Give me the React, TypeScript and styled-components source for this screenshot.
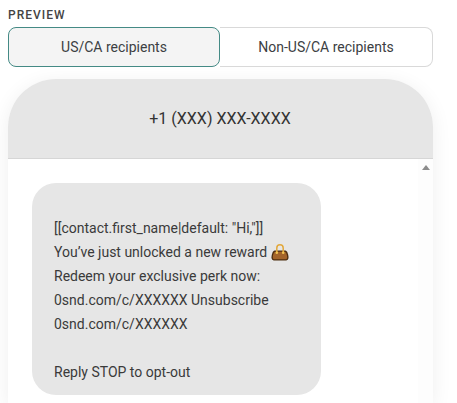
import styled, { createGlobalStyle } from "styled-components";

const GlobalStyle = createGlobalStyle`
  html, body {
    margin: 0;
    height: 403px;
    overflow: hidden;
    background: #fff;
    font-family: Roboto, "Liberation Sans", sans-serif;
  }
`;

const Page = styled.div`
  padding: 8px 24px 0 8px;
`;

const Label = styled.div`
  font-size: 12px;
  line-height: 14px;
  font-weight: 500;
  letter-spacing: 1px;
  color: #444;
  margin-bottom: 5px;
`;

const Toggle = styled.div`
  display: flex;
  height: 40px;
  margin-bottom: 12px;
`;

const ToggleOption = styled.div<{ $active?: boolean }>`
  flex: ${(p) => (p.$active ? "0 0 212px" : "1")};
  box-sizing: border-box;
  display: flex;
  align-items: center;
  justify-content: center;
  font-size: 14px;
  color: #3c4043;
  background: ${(p) => (p.$active ? "#f4f4f4" : "#fff")};
  border: 1px solid ${(p) => (p.$active ? "#448a85" : "#d9d9d9")};
  border-left-width: ${(p) => (p.$active ? "1px" : "0")};
  border-radius: ${(p) => (p.$active ? "8px" : "0 8px 8px 0")};
`;

const Phone = styled.div`
  height: 324px;
  border-radius: 48px 48px 0 0;
  background: #fff;
  box-shadow: 0 4px 20px rgba(0, 0, 0, 0.07);
  overflow: hidden;
`;

const PhoneHeader = styled.div`
  box-sizing: border-box;
  height: 80px;
  padding-right: 1px;
  display: flex;
  align-items: center;
  justify-content: center;
  background: #e6e6e6;
  border-bottom: 1px solid #d6d6d6;
  font-size: 16px;
  color: #333;
`;

const MessageArea = styled.div`
  display: flex;
  justify-content: space-between;
  height: 244px;
  padding-left: 24px;
`;

const Bubble = styled.div`
  box-sizing: border-box;
  width: 289px;
  height: 212px;
  margin-top: 24px;
  padding: 33px 0 0 22px;
  border-radius: 24px;
  background: #e6e6e6;
  font-size: 14px;
  line-height: 24px;
  color: #3a3a3a;
`;

const Line = styled.div`
  min-height: 24px;
  white-space: nowrap;
`;

const Bag = styled.svg`
  width: 18px;
  height: 18px;
  vertical-align: -4px;
`;

const Scrollbar = styled.div`
  width: 15px;
  display: flex;
  justify-content: center;
  padding-top: 6px;
  background: #fdfdfd;
`;

const ScrollArrow = styled.div`
  width: 0;
  height: 0;
  border-left: 4.5px solid transparent;
  border-right: 4.5px solid transparent;
  border-bottom: 5px solid #8c8c8c;
`;

export default function App() {
  return (
    <>
      <GlobalStyle />
      <Page>
        <Label>PREVIEW</Label>
        <Toggle>
          <ToggleOption $active>US/CA recipients</ToggleOption>
          <ToggleOption>Non-US/CA recipients</ToggleOption>
        </Toggle>
        <Phone>
          <PhoneHeader>+1 (XXX) XXX-XXXX</PhoneHeader>
          <MessageArea>
            <Bubble>
              <Line>[[contact.first_name|default: "Hi,"]]</Line>
              <Line>
                You’ve just unlocked a new reward{" "}
                <Bag viewBox="0 0 18 18">
                  <path d="M3.500 7.500h11c1.500 0 3 3.800 3 7 0 1.900-1.200 3-2.500 3H3c-1.300 0-2.500-1.100-2.500-3 0-3.200 1.500-7 3-7z" fill="#4d2e10" />
                  <path d="M4.200 8.700h9.600c1 0 2.400 3 2.400 5.800 0 1-.7 1.800-1.600 1.800H3.400c-.9 0-1.600-.8-1.600-1.800 0-2.800 1.400-5.800 2.400-5.800z" fill="#a3642a" />
                  <path d="M5.800 9.500V5a3.200 3.200 0 0 1 6.400 0v4.500" fill="none" stroke="#e2a83c" strokeWidth="1.500" />
                  <circle cx="5.800" cy="9.700" r="1.300" fill="#f2c552" />
                  <circle cx="12.200" cy="9.700" r="1.300" fill="#f2c552" />
                </Bag>
              </Line>
              <Line>Redeem your exclusive perk now:</Line>
              <Line>0snd.com/c/XXXXXX Unsubscribe</Line>
              <Line>0snd.com/c/XXXXXX</Line>
              <Line />
              <Line>Reply STOP to opt-out</Line>
            </Bubble>
            <Scrollbar>
              <ScrollArrow />
            </Scrollbar>
          </MessageArea>
        </Phone>
      </Page>
    </>
  );
}
